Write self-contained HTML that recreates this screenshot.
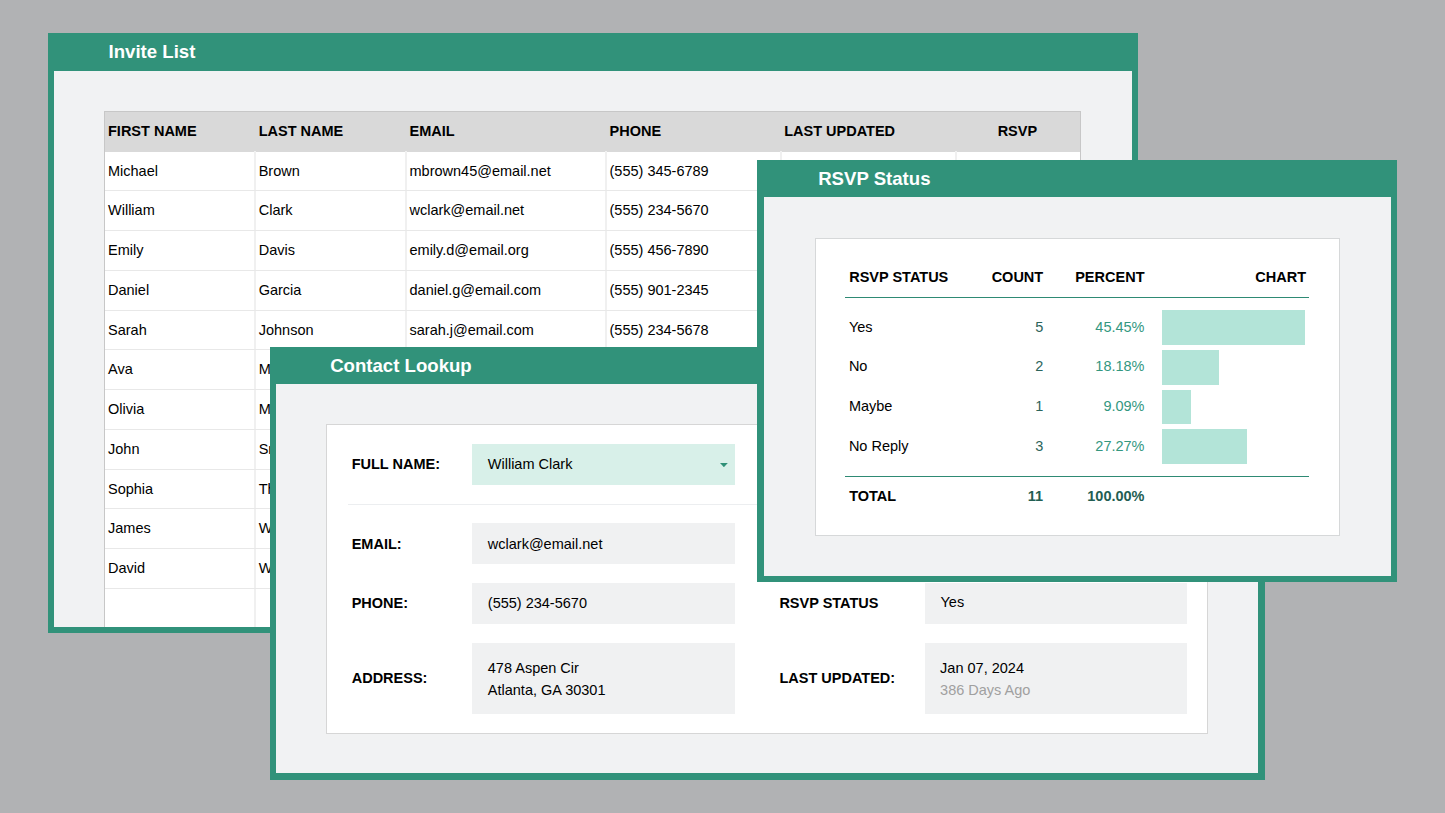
<!DOCTYPE html>
<html><head><meta charset="utf-8"><style>
html,body{margin:0;padding:0;}
body{width:1445px;height:813px;overflow:hidden;position:relative;background:#b1b2b4;font-family:"Liberation Sans",sans-serif;}
body div{position:absolute;}
.t{white-space:pre;line-height:1.15;}
</style></head><body>
<div style="left:48px;top:33px;width:1090.00px;height:600.00px;background:#31927a;"></div>
<div style="left:54px;top:71px;width:1077.50px;height:556.00px;background:#f1f2f3;"></div>
<div class="t" style="left:108.60000000000001px;top:40.96px;font-size:18.6px;font-weight:bold;color:#fff;">Invite List</div>
<div style="left:54px;top:71px;width:1078px;height:556px;overflow:hidden;">
<div style="left:49.80px;top:39.50px;width:977.00px;height:529.50px;background:#c7c7c7;"></div>
<div style="left:50.80px;top:40.50px;width:975.00px;height:40.00px;background:#d9d9d9;"></div>
<div style="left:50.80px;top:80.50px;width:975.00px;height:488.50px;background:#ffffff;"></div>
<div style="left:200.00px;top:80.20px;width:2.00px;height:488.80px;background:#f0f0f0;"></div>
<div style="left:350.80px;top:80.20px;width:2.00px;height:488.80px;background:#f0f0f0;"></div>
<div style="left:550.80px;top:80.20px;width:2.00px;height:488.80px;background:#f0f0f0;"></div>
<div style="left:725.50px;top:80.20px;width:2.00px;height:488.80px;background:#f0f0f0;"></div>
<div style="left:900.70px;top:80.20px;width:2.00px;height:488.80px;background:#f0f0f0;"></div>
<div style="left:50.80px;top:119.45px;width:975.00px;height:1.00px;background:#e8e8e8;"></div>
<div style="left:50.80px;top:159.20px;width:975.00px;height:1.00px;background:#e8e8e8;"></div>
<div style="left:50.80px;top:198.95px;width:975.00px;height:1.00px;background:#e8e8e8;"></div>
<div style="left:50.80px;top:238.70px;width:975.00px;height:1.00px;background:#e8e8e8;"></div>
<div style="left:50.80px;top:278.45px;width:975.00px;height:1.00px;background:#e8e8e8;"></div>
<div style="left:50.80px;top:318.20px;width:975.00px;height:1.00px;background:#e8e8e8;"></div>
<div style="left:50.80px;top:357.95px;width:975.00px;height:1.00px;background:#e8e8e8;"></div>
<div style="left:50.80px;top:397.70px;width:975.00px;height:1.00px;background:#e8e8e8;"></div>
<div style="left:50.80px;top:437.45px;width:975.00px;height:1.00px;background:#e8e8e8;"></div>
<div style="left:50.80px;top:477.20px;width:975.00px;height:1.00px;background:#e8e8e8;"></div>
<div style="left:50.80px;top:516.95px;width:975.00px;height:1.00px;background:#e8e8e8;"></div>
<div style="left:50.80px;top:556.70px;width:975.00px;height:1.00px;background:#e8e8e8;"></div>
<div class="t" style="left:54.00px;top:52.34px;font-size:14.5px;font-weight:bold;color:#000;">FIRST NAME</div>
<div class="t" style="left:204.70px;top:52.34px;font-size:14.5px;font-weight:bold;color:#000;">LAST NAME</div>
<div class="t" style="left:355.50px;top:52.34px;font-size:14.5px;font-weight:bold;color:#000;">EMAIL</div>
<div class="t" style="left:555.50px;top:52.34px;font-size:14.5px;font-weight:bold;color:#000;">PHONE</div>
<div class="t" style="left:730.20px;top:52.34px;font-size:14.5px;font-weight:bold;color:#000;">LAST UPDATED</div>
<div class="t" style="left:863.40px;width:200px;text-align:center;top:52.34px;font-size:14.5px;font-weight:bold;color:#000;">RSVP</div>
<div class="t" style="left:54.00px;top:91.64px;font-size:14.5px;color:#000;">Michael</div>
<div class="t" style="left:204.70px;top:91.64px;font-size:14.5px;color:#000;">Brown</div>
<div class="t" style="left:355.50px;top:91.64px;font-size:14.5px;color:#000;">mbrown45@email.net</div>
<div class="t" style="left:555.50px;top:91.64px;font-size:14.5px;color:#000;">(555) 345-6789</div>
<div class="t" style="left:54.00px;top:131.39px;font-size:14.5px;color:#000;">William</div>
<div class="t" style="left:204.70px;top:131.39px;font-size:14.5px;color:#000;">Clark</div>
<div class="t" style="left:355.50px;top:131.39px;font-size:14.5px;color:#000;">wclark@email.net</div>
<div class="t" style="left:555.50px;top:131.39px;font-size:14.5px;color:#000;">(555) 234-5670</div>
<div class="t" style="left:54.00px;top:171.14px;font-size:14.5px;color:#000;">Emily</div>
<div class="t" style="left:204.70px;top:171.14px;font-size:14.5px;color:#000;">Davis</div>
<div class="t" style="left:355.50px;top:171.14px;font-size:14.5px;color:#000;">emily.d@email.org</div>
<div class="t" style="left:555.50px;top:171.14px;font-size:14.5px;color:#000;">(555) 456-7890</div>
<div class="t" style="left:54.00px;top:210.89px;font-size:14.5px;color:#000;">Daniel</div>
<div class="t" style="left:204.70px;top:210.89px;font-size:14.5px;color:#000;">Garcia</div>
<div class="t" style="left:355.50px;top:210.89px;font-size:14.5px;color:#000;">daniel.g@email.com</div>
<div class="t" style="left:555.50px;top:210.89px;font-size:14.5px;color:#000;">(555) 901-2345</div>
<div class="t" style="left:54.00px;top:250.64px;font-size:14.5px;color:#000;">Sarah</div>
<div class="t" style="left:204.70px;top:250.64px;font-size:14.5px;color:#000;">Johnson</div>
<div class="t" style="left:355.50px;top:250.64px;font-size:14.5px;color:#000;">sarah.j@email.com</div>
<div class="t" style="left:555.50px;top:250.64px;font-size:14.5px;color:#000;">(555) 234-5678</div>
<div class="t" style="left:54.00px;top:290.39px;font-size:14.5px;color:#000;">Ava</div>
<div class="t" style="left:204.70px;top:290.39px;font-size:14.5px;color:#000;">Martinez</div>
<div class="t" style="left:355.50px;top:290.39px;font-size:14.5px;color:#000;">ava.m@email.com</div>
<div class="t" style="left:555.50px;top:290.39px;font-size:14.5px;color:#000;">(555) 678-9012</div>
<div class="t" style="left:54.00px;top:330.14px;font-size:14.5px;color:#000;">Olivia</div>
<div class="t" style="left:204.70px;top:330.14px;font-size:14.5px;color:#000;">Miller</div>
<div class="t" style="left:355.50px;top:330.14px;font-size:14.5px;color:#000;">olivia.m@email.com</div>
<div class="t" style="left:555.50px;top:330.14px;font-size:14.5px;color:#000;">(555) 789-0123</div>
<div class="t" style="left:54.00px;top:369.89px;font-size:14.5px;color:#000;">John</div>
<div class="t" style="left:204.70px;top:369.89px;font-size:14.5px;color:#000;">Smith</div>
<div class="t" style="left:355.50px;top:369.89px;font-size:14.5px;color:#000;">john.smith@email.com</div>
<div class="t" style="left:555.50px;top:369.89px;font-size:14.5px;color:#000;">(555) 123-4567</div>
<div class="t" style="left:54.00px;top:409.64px;font-size:14.5px;color:#000;">Sophia</div>
<div class="t" style="left:204.70px;top:409.64px;font-size:14.5px;color:#000;">Thompson</div>
<div class="t" style="left:355.50px;top:409.64px;font-size:14.5px;color:#000;">sophia.t@email.com</div>
<div class="t" style="left:555.50px;top:409.64px;font-size:14.5px;color:#000;">(555) 890-1234</div>
<div class="t" style="left:54.00px;top:449.39px;font-size:14.5px;color:#000;">James</div>
<div class="t" style="left:204.70px;top:449.39px;font-size:14.5px;color:#000;">Wilson</div>
<div class="t" style="left:355.50px;top:449.39px;font-size:14.5px;color:#000;">james.w@email.com</div>
<div class="t" style="left:555.50px;top:449.39px;font-size:14.5px;color:#000;">(555) 567-8901</div>
<div class="t" style="left:54.00px;top:489.14px;font-size:14.5px;color:#000;">David</div>
<div class="t" style="left:204.70px;top:489.14px;font-size:14.5px;color:#000;">Wright</div>
<div class="t" style="left:355.50px;top:489.14px;font-size:14.5px;color:#000;">david.w@email.com</div>
<div class="t" style="left:555.50px;top:489.14px;font-size:14.5px;color:#000;">(555) 012-3456</div>
</div>
<div style="left:270px;top:346.6px;width:995.00px;height:433.10px;background:#31927a;"></div>
<div style="left:276px;top:383.8px;width:982.30px;height:389.20px;background:#f1f2f3;"></div>
<div class="t" style="left:330.2px;top:354.76px;font-size:18.6px;font-weight:bold;color:#fff;">Contact Lookup</div>
<div style="left:326.4px;top:424.1px;width:881.90px;height:309.50px;background:#d6d6d6;"></div>
<div style="left:327.4px;top:425.1px;width:879.90px;height:307.50px;background:#ffffff;"></div>
<div class="t" style="left:351.7px;top:456.24px;font-size:14.5px;font-weight:bold;color:#000;">FULL NAME:</div>
<div style="left:471.9px;top:443.8px;width:263.00px;height:40.90px;background:#d8f0e9;"></div>
<div class="t" style="left:487.79999999999995px;top:456.24px;font-size:14.5px;color:#000;">William Clark</div>
<svg style="position:absolute;left:720px;top:462.9px" width="8" height="4.2" viewBox="0 0 8 4.2"><path d="M0 0H7.8L3.9 4.2Z" fill="#2e9077"/></svg>
<div style="left:347.5px;top:503.5px;width:839.80px;height:1.40px;background:#eceef0;"></div>
<div class="t" style="left:351.7px;top:536.24px;font-size:14.5px;font-weight:bold;color:#000;">EMAIL:</div>
<div style="left:471.9px;top:523.1px;width:263.00px;height:41.30px;background:#f0f1f2;"></div>
<div class="t" style="left:487.79999999999995px;top:536.24px;font-size:14.5px;color:#000;">wclark@email.net</div>
<div class="t" style="left:351.7px;top:594.74px;font-size:14.5px;font-weight:bold;color:#000;">PHONE:</div>
<div style="left:471.9px;top:583px;width:263.00px;height:41.20px;background:#f0f1f2;"></div>
<div class="t" style="left:487.79999999999995px;top:594.74px;font-size:14.5px;color:#000;">(555) 234-5670</div>
<div class="t" style="left:351.7px;top:670.44px;font-size:14.5px;font-weight:bold;color:#000;">ADDRESS:</div>
<div style="left:471.9px;top:642.8px;width:263.00px;height:71.20px;background:#f0f1f2;"></div>
<div class="t" style="left:487.79999999999995px;top:660.44px;font-size:14.5px;color:#000;">478 Aspen Cir</div>
<div class="t" style="left:487.79999999999995px;top:682.44px;font-size:14.5px;color:#000;">Atlanta, GA 30301</div>
<div class="t" style="left:779.4px;top:594.74px;font-size:14.5px;font-weight:bold;color:#000;">RSVP STATUS</div>
<div style="left:925px;top:583px;width:262.30px;height:41.20px;background:#f0f1f2;"></div>
<div class="t" style="left:940.5px;top:594.34px;font-size:14.5px;color:#000;">Yes</div>
<div class="t" style="left:779.4px;top:670.44px;font-size:14.5px;font-weight:bold;color:#000;">LAST UPDATED:</div>
<div style="left:925px;top:642.8px;width:262.30px;height:71.20px;background:#f0f1f2;"></div>
<div class="t" style="left:940.1px;top:660.44px;font-size:14.5px;color:#000;">Jan 07, 2024</div>
<div class="t" style="left:940.1px;top:682.44px;font-size:14.5px;color:#a0a0a0;">386 Days Ago</div>
<div style="left:757.4px;top:159.7px;width:639.60px;height:422.50px;background:#31927a;"></div>
<div style="left:763.7px;top:196.8px;width:627.30px;height:378.90px;background:#f1f2f3;"></div>
<div class="t" style="left:818.1999999999999px;top:168.16px;font-size:18.6px;font-weight:bold;color:#fff;">RSVP Status</div>
<div style="left:814.6px;top:237.8px;width:525.10px;height:297.90px;background:#d6d8d9;"></div>
<div style="left:815.6px;top:238.8px;width:523.10px;height:295.90px;background:#ffffff;"></div>
<div class="t" style="left:849.1999999999999px;top:268.84px;font-size:14.5px;font-weight:bold;color:#000;">RSVP STATUS</div>
<div class="t" style="right:401.80px;top:268.84px;font-size:14.5px;font-weight:bold;color:#000;">COUNT</div>
<div class="t" style="right:300.50px;top:268.84px;font-size:14.5px;font-weight:bold;color:#000;">PERCENT</div>
<div class="t" style="right:139.00px;top:268.84px;font-size:14.5px;font-weight:bold;color:#000;">CHART</div>
<div style="left:845.2px;top:296.6px;width:463.60px;height:1.40px;background:#2e8a74;"></div>
<div class="t" style="left:848.9px;top:318.64px;font-size:14.5px;color:#000;">Yes</div>
<div class="t" style="right:401.80px;top:318.64px;font-size:14.5px;color:#2b645b;">5</div>
<div class="t" style="right:300.50px;top:318.64px;font-size:14.5px;color:#34977f;">45.45%</div>
<div style="left:1162.1px;top:310.3px;width:142.70px;height:34.70px;background:#b3e4d8;"></div>
<div class="t" style="left:848.9px;top:358.39px;font-size:14.5px;color:#000;">No</div>
<div class="t" style="right:401.80px;top:358.39px;font-size:14.5px;color:#2b645b;">2</div>
<div class="t" style="right:300.50px;top:358.39px;font-size:14.5px;color:#34977f;">18.18%</div>
<div style="left:1162.1px;top:350.0px;width:56.60px;height:34.70px;background:#b3e4d8;"></div>
<div class="t" style="left:848.9px;top:398.14px;font-size:14.5px;color:#000;">Maybe</div>
<div class="t" style="right:401.80px;top:398.14px;font-size:14.5px;color:#2b645b;">1</div>
<div class="t" style="right:300.50px;top:398.14px;font-size:14.5px;color:#34977f;">9.09%</div>
<div style="left:1162.1px;top:389.70000000000005px;width:28.80px;height:34.70px;background:#b3e4d8;"></div>
<div class="t" style="left:848.9px;top:437.89px;font-size:14.5px;color:#000;">No Reply</div>
<div class="t" style="right:401.80px;top:437.89px;font-size:14.5px;color:#2b645b;">3</div>
<div class="t" style="right:300.50px;top:437.89px;font-size:14.5px;color:#34977f;">27.27%</div>
<div style="left:1162.1px;top:429.40000000000003px;width:85.40px;height:34.70px;background:#b3e4d8;"></div>
<div style="left:845.2px;top:475.8px;width:463.60px;height:1.40px;background:#2e8a74;"></div>
<div class="t" style="left:849.1999999999999px;top:487.74px;font-size:14.5px;font-weight:bold;color:#000;">TOTAL</div>
<div class="t" style="right:401.80px;top:487.74px;font-size:14.5px;font-weight:bold;color:#235e52;">11</div>
<div class="t" style="right:300.50px;top:487.74px;font-size:14.5px;font-weight:bold;color:#235e52;">100.00%</div>
</body></html>
